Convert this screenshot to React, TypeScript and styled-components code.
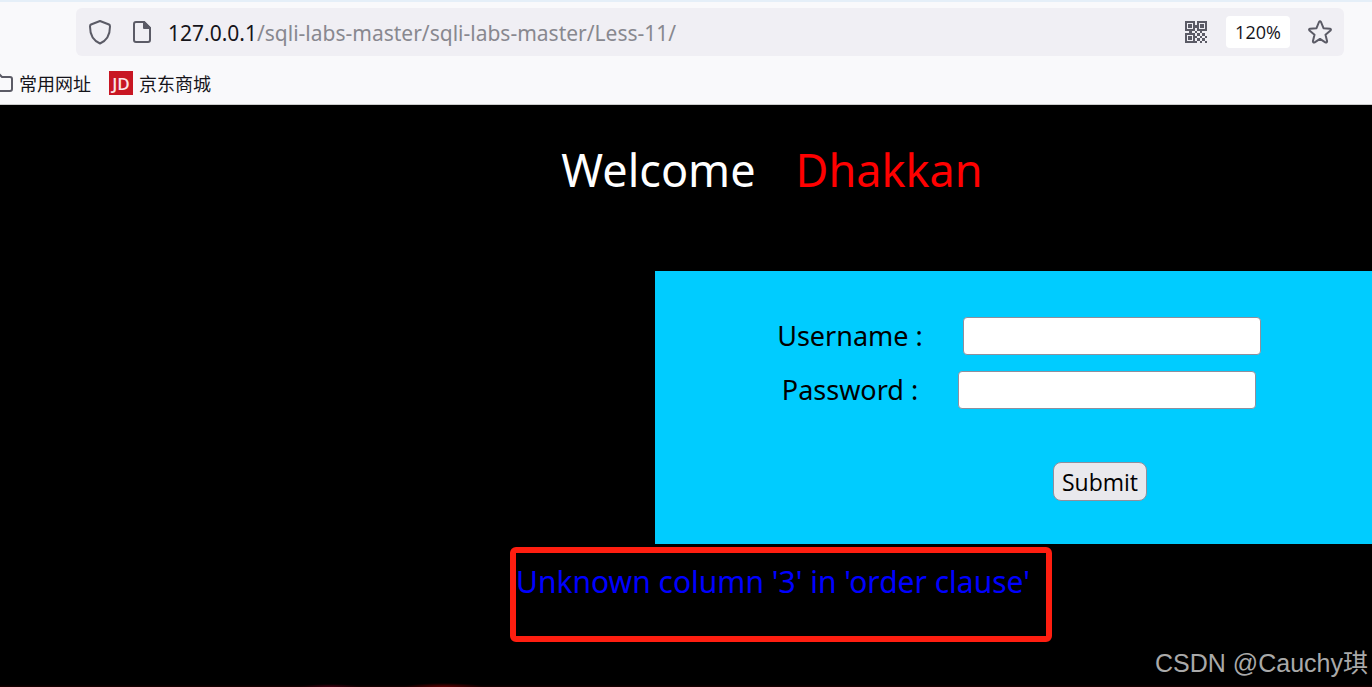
import React from "react";
import styled, { createGlobalStyle } from "styled-components";

const GlobalStyle = createGlobalStyle`
  * { box-sizing: border-box; }
  html, body { margin: 0; background: #000; }
  body { font-family: "Noto Sans", "Noto Sans CJK SC", sans-serif; }
`;

const Window = styled.div`
  display: flex;
  flex-direction: column;
  min-height: 100vh;
  overflow: hidden;
  position: relative;
`;

const Chrome = styled.header`
  background: #f9f9fb;
  border-top: 2px solid #e5eff8;
  border-bottom: 1px solid #cccccc;
  padding-top: 6px;
`;

const AddressBar = styled.div`
  display: flex;
  align-items: center;
  height: 48px;
  margin: 0 28px 0 76px;
  padding: 0 12px;
  border-radius: 6px;
  background: #f0eff4;
`;

const IconButton = styled.button<{ $gap?: number }>`
  display: flex;
  padding: 0;
  margin: 0 ${(p) => p.$gap ?? 0}px 0 0;
  border: 0;
  background: none;
  color: #5b5b66;
`;

const Address = styled.div`
  flex: 1;
  padding-top: 2px;
  font-size: 21px;
  line-height: 28px;
  color: #88888f;
  white-space: nowrap;
`;

const Host = styled.span`
  color: #15141a;
`;

const ZoomButton = styled.button`
  width: 64px;
  height: 32px;
  margin: 0 18px 0 0;
  padding: 0;
  border: 0;
  border-radius: 4px;
  background: #fff;
  color: #15141a;
  font: 18px/32px "Open Sans", sans-serif;
`;

const Bookmarks = styled.nav`
  display: flex;
  align-items: center;
  height: 48px;
  padding-top: 6px;
  overflow: hidden;
`;

const Bookmark = styled.a`
  display: flex;
  align-items: center;
  gap: 6px;
  margin-right: 18px;
  color: #15141a;
  font: 18px/24px "Noto Sans CJK SC", sans-serif;
  text-decoration: none;
`;

const FolderIcon = styled.svg`
  margin-left: -10px;
`;

const JdBadge = styled.span`
  width: 24px;
  height: 24px;
  background: #c81623;
  color: #fbe4e6;
  font: 600 17px/25px "Open Sans", sans-serif;
  text-align: center;
`;

const Page = styled.main`
  flex: 1;
  background:
    radial-gradient(ellipse 40px 4px at 444px 100%, #600000, transparent),
    radial-gradient(ellipse 30px 3px at 330px 100%, #400010, transparent),
    linear-gradient(to top, #1c0000, transparent 2px),
    #000;
`;

const Title = styled.h1`
  display: flex;
  justify-content: center;
  gap: 40px;
  margin: 0;
  padding: 32px 0 0 172px;
  font-size: 45px;
  font-weight: 400;
  line-height: 66px;
  color: #fff;
`;

const Name = styled.span`
  color: #f00;
`;

const LoginForm = styled.form`
  display: flex;
  flex-direction: column;
  align-items: center;
  height: 273px;
  margin: 68px 0 0 655px;
  padding: 46px 0 0 11px;
  background: #0cf;
`;

const Field = styled.label`
  display: flex;
  align-items: center;
  gap: 40px;
  margin-bottom: 16px;
  font-size: 27px;
  line-height: 38px;
  color: #000;
`;

const TextInput = styled.input`
  width: 298px;
  height: 38px;
  padding: 2px 6px;
  border: 1px solid #8f8f9d;
  border-radius: 4px;
  background: #fff;
  font: 24px "Noto Sans", sans-serif;
`;

const SubmitButton = styled.button`
  width: 94px;
  height: 39px;
  margin: 37px 0 0 162px;
  padding: 0;
  border: 1px solid #8f8f9d;
  border-radius: 8px;
  background: #e9e9ed;
  color: #000;
  font: 23px/36px "Open Sans", sans-serif;
`;

const ErrorBox = styled.p`
  width: 542px;
  height: 95px;
  margin: 3px 0 0 510px;
  padding: 9px 0 0;
  border: 6px solid #ff1e10;
  border-radius: 6px;
  color: #00f;
  font-size: 30px;
  line-height: 40px;
  white-space: nowrap;
`;

const Watermark = styled.div`
  position: absolute;
  right: 4px;
  bottom: 6px;
  color: #a9a9a9;
  font: 25px/36px "Liberation Sans", "Noto Sans CJK SC", sans-serif;
`;

const ShieldIcon = () => (
  <svg width="24" height="26" viewBox="0 0 24 26" fill="none" stroke="currentColor" strokeWidth="2" strokeLinejoin="round">
    <path d="M12 2 21 5.500Q22 6 22 7.500C22 15 19 21.500 12 24.500 5 21.500 2 15 2 7.500Q2 6 3 5.500Z" />
  </svg>
);

const PageIcon = () => (
  <svg width="20" height="24" viewBox="0 0 20 24" fill="none" stroke="currentColor" strokeWidth="2" strokeLinejoin="round">
    <path d="M4 2H12L18 8V20Q18 22 16 22H4Q2 22 2 20V4Q2 2 4 2Z" />
    <path d="M12 2V8H18Z" fill="currentColor" />
  </svg>
);

const finder = (x: number, y: number) => (
  <g key={`${x}-${y}`}>
    <rect x={x + 1} y={y + 1} width="8" height="8" fill="none" stroke="currentColor" strokeWidth="2" />
    <rect x={x + 3} y={y + 3} width="4" height="4" fill="currentColor" />
  </g>
);

const QrIcon = () => (
  <svg width="22" height="22" viewBox="0 0 22 22">
    {[[0, 0], [12, 0], [0, 12]].map(([x, y]) => finder(x, y))}
    <path
      fill="currentColor"
      d="M10 4h2v3h-2zM4 10h3v2H4zM10 10h2v2h-2zM15 10h2v2h-2zM12 12h3v3h-3zM17 12h3v3h-3zM10 15h2v2h-2zM15 15h2v2h-2zM20 15h2v2h-2zM12 17h3v3h-3zM17 17h3v3h-3zM10 20h2v2h-2zM15 20h2v2h-2zM20 20h2v2h-2z"
    />
  </svg>
);

const StarIcon = () => (
  <svg width="24" height="24" viewBox="0 0 24 24" fill="none" stroke="currentColor" strokeWidth="2" strokeLinejoin="round">
    <path d="M11 2Q12 .5 13 2L15.500 8.200 22 8.700Q23.600 9.200 22.500 10.500L17.500 14.700 19.100 21.200Q19 23 17.300 22.300L12 18.900 6.700 22.300Q5 23 4.900 21.200L6.500 14.700 1.500 10.500Q.4 9.200 2 8.700L8.500 8.200Z" />
  </svg>
);

export default function App() {
  return (
    <Window>
      <GlobalStyle />
      <Chrome>
        <AddressBar>
          <IconButton type="button" aria-label="Tracking protection" $gap={20}><ShieldIcon /></IconButton>
          <IconButton type="button" aria-label="Site information" $gap={16}><PageIcon /></IconButton>
          <Address><Host>127.0.0.1</Host>/sqli-labs-master/sqli-labs-master/Less-11/</Address>
          <IconButton type="button" aria-label="QR code" $gap={19}><QrIcon /></IconButton>
          <ZoomButton type="button">120%</ZoomButton>
          <IconButton type="button" aria-label="Bookmark this page"><StarIcon /></IconButton>
        </AddressBar>
        <Bookmarks>
          <Bookmark href="#folder">
            <FolderIcon width="23" height="20" viewBox="0 0 23 20" fill="none" stroke="#5b5b66" strokeWidth="2">
              <path d="M3 1H9L12 4H20Q22 4 22 6V16Q22 18 20 18H3Q1 18 1 16V3Q1 1 3 1Z" />
            </FolderIcon>
            常用网址
          </Bookmark>
          <Bookmark href="#jd"><JdBadge>JD</JdBadge>京东商城</Bookmark>
        </Bookmarks>
      </Chrome>
      <Page>
        <Title><span>Welcome</span><Name>Dhakkan</Name></Title>
        <LoginForm onSubmit={(e: React.FormEvent) => e.preventDefault()}>
          <Field>Username : <TextInput type="text" name="uname" /></Field>
          <Field>Password : <TextInput type="text" name="passwd" /></Field>
          <SubmitButton type="submit">Submit</SubmitButton>
        </LoginForm>
        <ErrorBox role="alert">Unknown column '3' in 'order clause'</ErrorBox>
      </Page>
      <Watermark>CSDN @Cauchy琪</Watermark>
    </Window>
  );
}
